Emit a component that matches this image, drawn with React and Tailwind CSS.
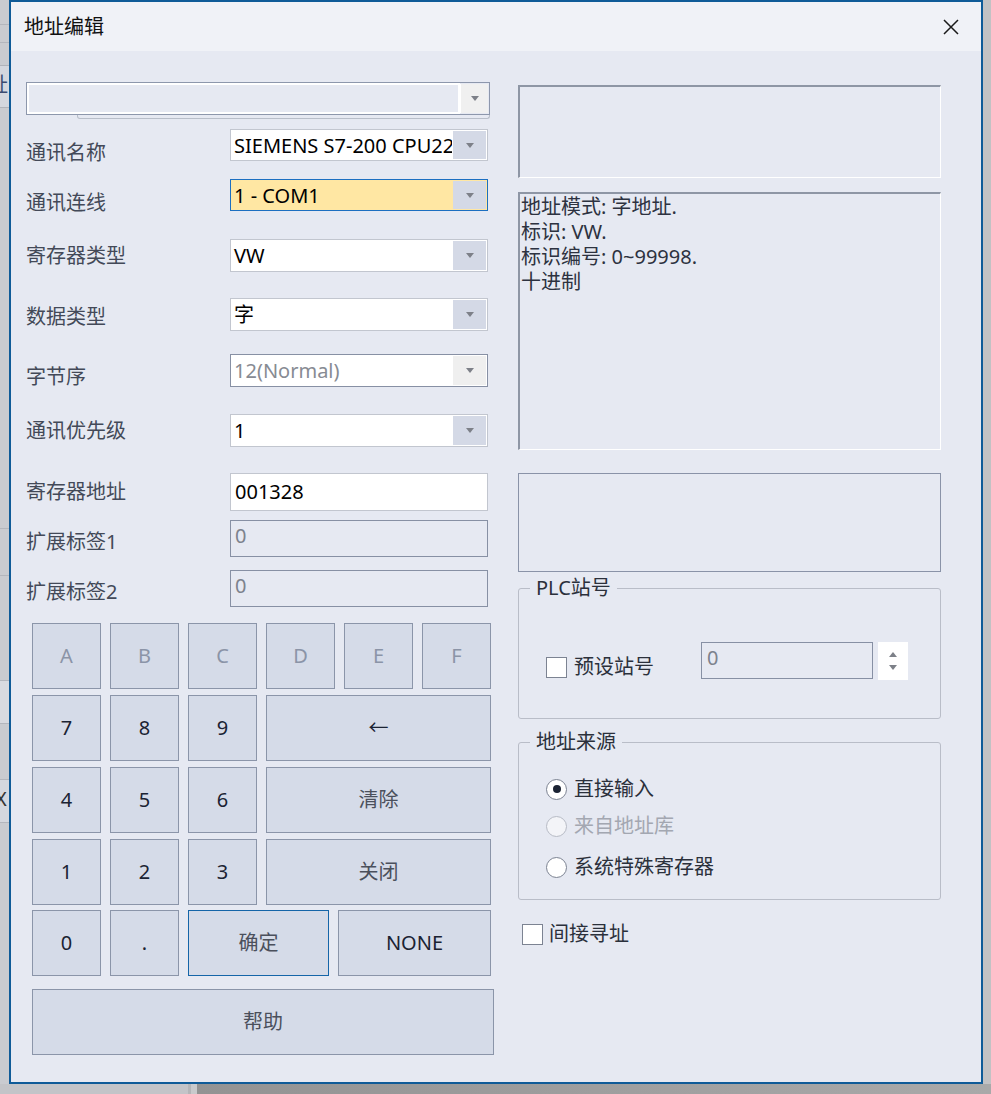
import React from 'react';

const Caret = ({ up }) => (
  <svg width="8" height="5" viewBox="0 0 8 5" className="block">
    <path d={up ? 'M0 5h8L4 0z' : 'M0 0h8L4 5z'} fill="#7d8088" />
  </svg>
);

const Select = ({ value, tone = 'normal' }) => {
  const box =
    tone === 'focus'
      ? 'border-[#1c6fc1] bg-[#ffe7a3]'
      : tone === 'disabled'
      ? 'border-[#8790a4] bg-white'
      : 'border-[#c2c6cf] bg-white';
  return (
    <div className={`flex h-full w-[258px] border ${box}`}>
      <div
        className={`min-w-0 flex-1 overflow-hidden whitespace-nowrap pl-[3px] text-[20px] leading-[31px] ${
          tone === 'disabled' ? 'text-[#878b93]' : 'text-black'
        }`}
      >
        {value}
      </div>
      <div
        className={`m-[1px] flex w-[33px] items-center justify-center ${
          tone === 'disabled' ? 'bg-[#efefef]' : 'bg-[#d4d9e6]'
        }`}
      >
        <Caret />
      </div>
    </div>
  );
};

const TextBox = ({ value, disabled }) => (
  <div
    className={`h-full w-[258px] border pl-[4px] text-[20px] leading-[24px] ${
      disabled
        ? 'border-[#8790a4] pt-[3px] text-[#7d828d]'
        : 'border-[#c2c6cf] bg-white pt-[6px] text-black'
    }`}
  >
    {value}
  </div>
);

const Row = ({ label, h, mt, lt, children }) => (
  <div className={`flex ${h} ${mt}`}>
    <div className={`w-[204px] text-[20px] leading-[24px] text-[#434958] ${lt}`}>{label}</div>
    {children}
  </div>
);

const Key = ({ children, className = '', tone = 'dark' }) => (
  <div
    className={`flex h-[66px] items-center justify-center border bg-[#d5dbe8] text-[20px] ${
      tone === 'focus' ? 'border-[#1565a8]' : 'border-[#8b95a9]'
    } ${
      tone === 'muted'
        ? 'text-[#8b94a7]'
        : tone === 'cjk' || tone === 'focus'
        ? 'text-[#4b505c]'
        : 'text-[#1b2333]'
    } ${className}`}
  >
    {children}
  </div>
);

const Check = () => <div className="h-[21px] w-[21px] shrink-0 border border-[#7c8392] bg-white" />;

const Radio = ({ checked, disabled }) => (
  <div
    className={`flex h-[21px] w-[21px] shrink-0 items-center justify-center rounded-full border ${
      disabled ? 'border-[#b7bbc5] bg-[#f3f4f8]' : 'border-[#7c8392] bg-white'
    }`}
  >
    {checked && <div className="h-[8px] w-[8px] rounded-full bg-[#1b2333]" />}
  </div>
);

const Legend = ({ children }) => (
  <span className="absolute left-[11px] top-[-13px] bg-[#e6e9f2] px-[6px] text-[20px] leading-[24px] text-[#2b303b]">
    {children}
  </span>
);

function LeftStrip() {
  return (
    <div className="flex h-[1084px] w-[9px] flex-col overflow-hidden bg-[#c9cbd0]">
      <div className="h-[24px] shrink-0" />
      <div className="h-[1px] shrink-0 bg-[#b3b6bd]" />
      <div className="h-[17px] shrink-0" />
      <div className="h-[1px] shrink-0 bg-[#b3b6bd]" />
      <div className="h-[22px] shrink-0" />
      <div className="h-[43px] shrink-0 overflow-hidden border-y border-[#b0b3ba] bg-[#d4d7de]">
        <div className="ml-[-12px] mt-[7px] text-[20px] leading-[24px] text-[#3a4a70]">址</div>
      </div>
      <div className="h-[420px] shrink-0" />
      <div className="h-[1px] shrink-0 bg-[#b3b6bd]" />
      <div className="h-[46px] shrink-0" />
      <div className="h-[1px] shrink-0 bg-[#b3b6bd]" />
      <div className="h-[104px] shrink-0" />
      <div className="h-[44px] shrink-0 border-y border-[#b3b6bd] bg-[#d8dae0]" />
      <div className="h-[55px] shrink-0" />
      <div className="h-[44px] shrink-0 overflow-hidden border-y border-[#b3b6bd] bg-[#d4d7de]">
        <div className="ml-[-5px] mt-[7px] text-[20px] leading-[24px] text-[#333]">X</div>
      </div>
      <div className="flex-1" />
    </div>
  );
}

export default function App() {
  return (
    <div className="h-[1094px] w-[991px] overflow-hidden bg-[#c2c2c4] font-['Noto_Sans','Noto_Sans_CJK_SC',sans-serif]">
      <div className="flex">
        <LeftStrip />
        <div className="flex h-[1084px] w-[974px] shrink-0 flex-col border-2 border-[#0f5b98] bg-[#e6e9f2]">
          {/* title bar */}
          <div className="flex h-[49px] shrink-0 items-center justify-between bg-[#f0f2f7] pl-[13px] pr-[22px]">
            <span className="text-[20px] leading-[24px] text-[#111]">地址编辑</span>
            <svg width="16" height="16" viewBox="0 0 16 16">
              <path d="M1 1L15 15M15 1L1 15" stroke="#1a1a1a" strokeWidth="1.5" />
            </svg>
          </div>

          <div className="flex pl-[15px]">
            {/* left column */}
            <div className="flex w-[468px] shrink-0 flex-col">
              <div className="mt-[31px] flex h-[33px] w-[464px] border border-[#8d97ac] bg-[#e6e9f2]">
                <div className="flex-1 border-2 border-white" />
                <div className="mr-[1px] mt-[1px] mb-[1px] flex w-[28px] items-center justify-center border-l border-white bg-[#f0f0f0]">
                  <Caret />
                </div>
              </div>
              <div className="ml-[51px] h-[4px] w-[413px] rounded-b-[3px] border-x border-b border-[#b8bec9]" />

              <Row label="通讯名称" h="h-[32px]" mt="mt-[10px]" lt="mt-[12px]">
                <Select value="SIEMENS S7-200 CPU22x" />
              </Row>
              <Row label="通讯连线" h="h-[32px]" mt="mt-[18px]" lt="mt-[12px]">
                <Select value="1 - COM1" tone="focus" />
              </Row>
              <Row label="寄存器类型" h="h-[33px]" mt="mt-[28px]" lt="mt-[5px]">
                <Select value="VW" />
              </Row>
              <Row label="数据类型" h="h-[33px]" mt="mt-[26px]" lt="mt-[7px]">
                <Select value="字" />
              </Row>
              <Row label="字节序" h="h-[33px]" mt="mt-[23px]" lt="mt-[11px]">
                <Select value="12(Normal)" tone="disabled" />
              </Row>
              <Row label="通讯优先级" h="h-[33px]" mt="mt-[27px]" lt="mt-[5px]">
                <Select value="1" />
              </Row>
              <Row label="寄存器地址" h="h-[38px]" mt="mt-[26px]" lt="mt-[7px]">
                <TextBox value="001328" />
              </Row>
              <Row label="扩展标签1" h="h-[37px]" mt="mt-[9px]" lt="mt-[10px]">
                <TextBox value="0" disabled />
              </Row>
              <Row label="扩展标签2" h="h-[37px]" mt="mt-[13px]" lt="mt-[10px]">
                <TextBox value="0" disabled />
              </Row>

              {/* keypad */}
              <div className="ml-[6px] mt-[16px] flex flex-col">
                <div className="flex gap-[9px]">
                  {['A', 'B', 'C', 'D', 'E', 'F'].map((k) => (
                    <Key key={k} tone="muted" className="w-[69px]">
                      {k}
                    </Key>
                  ))}
                </div>
                <div className="mt-[6px] flex gap-[9px]">
                  <Key className="w-[69px]">7</Key>
                  <Key className="w-[69px]">8</Key>
                  <Key className="w-[69px]">9</Key>
                  <Key className="w-[225px]">←</Key>
                </div>
                <div className="mt-[6px] flex gap-[9px]">
                  <Key className="w-[69px]">4</Key>
                  <Key className="w-[69px]">5</Key>
                  <Key className="w-[69px]">6</Key>
                  <Key tone="cjk" className="w-[225px]">清除</Key>
                </div>
                <div className="mt-[6px] flex gap-[9px]">
                  <Key className="w-[69px]">1</Key>
                  <Key className="w-[69px]">2</Key>
                  <Key className="w-[69px]">3</Key>
                  <Key tone="cjk" className="w-[225px]">关闭</Key>
                </div>
                <div className="mt-[5px] flex gap-[9px]">
                  <Key className="w-[69px]">0</Key>
                  <Key className="w-[69px]">.</Key>
                  <Key tone="focus" className="w-[141px]">确定</Key>
                  <Key className="w-[153px]">NONE</Key>
                </div>
                <Key tone="cjk" className="mt-[13px] w-[462px]">帮助</Key>
              </div>
            </div>

            {/* right column */}
            <div className="ml-[24px] flex w-[423px] shrink-0 flex-col">
              <div className="mt-[34px] h-[93px] border-b border-l-2 border-r border-t-2 border-b-white border-l-[#8e96a5] border-r-white border-t-[#8e96a5]" />
              <div className="mt-[14px] h-[258px] border-b border-l-2 border-r border-t-2 border-b-white border-l-[#8e96a5] border-r-white border-t-[#8e96a5] pl-[1px] text-[20px] leading-[25px] text-[#2d3240]">
                <div>地址模式: 字地址.</div>
                <div>标识: VW.</div>
                <div>标识编号: 0~99998.</div>
                <div>十进制</div>
              </div>
              <div className="mt-[23px] h-[99px] border border-[#8a93a8]" />

              <div className="relative mt-[16px] h-[131px] rounded-[3px] border border-[#b9bdc8]">
                <Legend>PLC站号</Legend>
                <div className="flex items-start pl-[27px] pt-[53px]">
                  <div className="mt-[13px] flex w-[155px] items-center gap-[7px]">
                    <Check />
                    <span className="text-[20px] leading-[24px] text-[#2b303b]">预设站号</span>
                  </div>
                  <div className="h-[37px] w-[172px] border border-[#8790a4] pl-[5px] pt-[3px] text-[20px] leading-[24px] text-[#7d828d]">
                    0
                  </div>
                  <div className="ml-[5px] flex h-[38px] w-[30px] flex-col items-center justify-center gap-[8px] bg-white">
                    <Caret up />
                    <Caret />
                  </div>
                </div>
              </div>

              <div className="relative mt-[23px] h-[158px] rounded-[3px] border border-[#b9bdc8]">
                <Legend>地址来源</Legend>
                <div className="flex flex-col pl-[27px] pt-[34px]">
                  <div className="flex h-[24px] items-center gap-[7px]">
                    <Radio checked />
                    <span className="text-[20px] leading-[24px] text-[#2b303b]">直接输入</span>
                  </div>
                  <div className="mt-[13px] flex h-[24px] items-center gap-[7px]">
                    <Radio disabled />
                    <span className="text-[20px] leading-[24px] text-[#a3a7b1]">来自地址库</span>
                  </div>
                  <div className="mt-[17px] flex h-[24px] items-center gap-[7px]">
                    <Radio />
                    <span className="text-[20px] leading-[24px] text-[#2b303b]">系统特殊寄存器</span>
                  </div>
                </div>
              </div>

              <div className="ml-[4px] mt-[22px] flex h-[24px] items-center gap-[6px]">
                <Check />
                <span className="text-[20px] leading-[24px] text-[#2b303b]">间接寻址</span>
              </div>
            </div>
          </div>
        </div>
        <div className="h-[1084px] flex-1 bg-[#c2c2c4]" />
      </div>
      <div className="flex h-[10px]">
        <div className="w-[188px] bg-[#c3c4c8]" />
        <div className="w-[3px] bg-[#b4b5b8]" />
        <div className="w-[6px] bg-[#c9cacc]" />
        <div className="flex-1 bg-gradient-to-r from-[#939393] to-[#a9a9a9]" />
      </div>
    </div>
  );
}
